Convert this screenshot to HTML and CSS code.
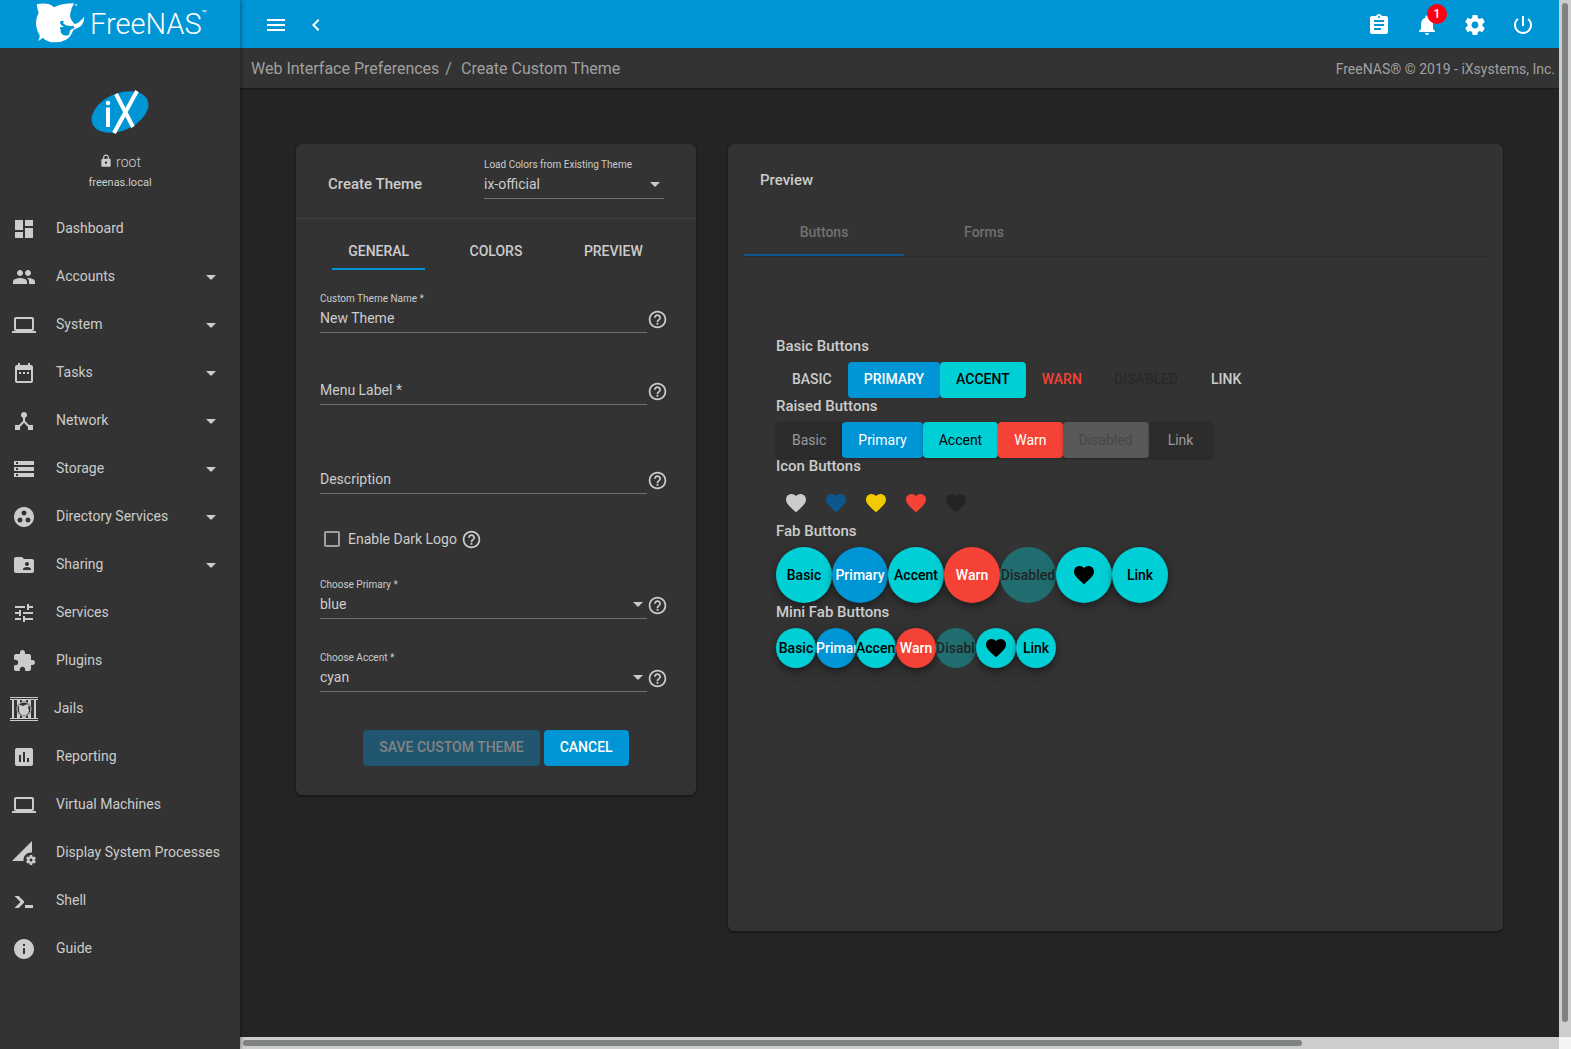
FILE: index.html
```html
<!DOCTYPE html>
<html lang="en">
<head>
<meta charset="utf-8">
<title>FreeNAS - Create Custom Theme</title>
<link rel="stylesheet" href="styles.css">
</head>
<body>
<svg class="defs" aria-hidden="true">
  <symbol id="i-dashboard" viewBox="0 0 24 24"><path d="M3 13h8V3H3v10zm0 8h8v-6H3v6zm10 0h8V11h-8v10zm0-18v6h8V3h-8z"/></symbol>
  <symbol id="i-people" viewBox="0 0 24 24"><path d="M16 11c1.66 0 2.99-1.34 2.99-3S17.66 5 16 5c-1.66 0-3 1.34-3 3s1.34 3 3 3zm-8 0c1.66 0 2.99-1.34 2.99-3S9.66 5 8 5C6.34 5 5 6.34 5 8s1.34 3 3 3zm0 2c-2.33 0-7 1.17-7 3.5V19h14v-2.500c0-2.330-4.670-3.500-7-3.500zm8 0c-.29 0-.62.020-.97.050 1.160.840 1.970 1.970 1.970 3.450V19h6v-2.500c0-2.330-4.670-3.500-7-3.500z"/></symbol>
  <symbol id="i-laptop" viewBox="0 0 24 24"><path d="M20 18c1.100 0 1.990-.9 1.990-2L22 6c0-1.100-.9-2-2-2H4c-1.100 0-2 .9-2 2v10c0 1.100.9 2 2 2H0v2h24v-2h-4zM4 6h16v10H4V6z"/></symbol>
  <symbol id="i-date" viewBox="0 0 24 24"><path d="M9 11H7v2h2v-2zm4 0h-2v2h2v-2zm4 0h-2v2h2v-2zm2-7h-1V2h-2v2H8V2H6v2H5c-1.110 0-1.990.9-1.990 2L3 20c0 1.100.89 2 2 2h14c1.100 0 2-.9 2-2V6c0-1.100-.9-2-2-2zm0 16H5V9h14v11z"/></symbol>
  <symbol id="i-hub" viewBox="0 0 24 24"><path d="M17 16l-4-4V8.820C14.160 8.400 15 7.300 15 6c0-1.660-1.340-3-3-3S9 4.340 9 6c0 1.300.84 2.400 2 2.820V12l-4 4H3v5h5v-3.050l4-4.200 4 4.200V21h5v-5h-4z"/></symbol>
  <symbol id="i-storage" viewBox="0 0 24 24"><path d="M2 20h20v-4H2v4zm2-3h2v2H4v-2zM2 4v4h20V4H2zm4 3H4V5h2v2zm-4 7h20v-4H2v4zm2-3h2v2H4v-2z"/></symbol>
  <symbol id="i-group" viewBox="0 0 24 24"><path d="M12 2C6.480 2 2 6.480 2 12s4.480 10 10 10 10-4.480 10-10S17.520 2 12 2zM8 17.500c-1.380 0-2.500-1.120-2.500-2.500s1.120-2.500 2.500-2.500 2.500 1.120 2.500 2.500-1.120 2.500-2.500 2.500zM9.500 8c0-1.380 1.120-2.500 2.500-2.500s2.500 1.120 2.500 2.500-1.120 2.500-2.500 2.500S9.500 9.380 9.500 8zm6.500 9.500c-1.380 0-2.500-1.120-2.500-2.500s1.120-2.500 2.500-2.500 2.500 1.120 2.500 2.500-1.120 2.500-2.500 2.500z"/></symbol>
  <symbol id="i-shared" viewBox="0 0 24 24"><path d="M20 6h-8l-2-2H4c-1.100 0-1.990.9-1.990 2L2 18c0 1.100.9 2 2 2h16c1.100 0 2-.9 2-2V8c0-1.100-.9-2-2-2zm-5 3c1.100 0 2 .9 2 2s-.9 2-2 2-2-.9-2-2 .9-2 2-2zm4 8h-8v-1c0-1.330 2.670-2 4-2s4 .67 4 2v1z"/></symbol>
  <symbol id="i-tune" viewBox="0 0 24 24"><path d="M3 17v2h6v-2H3zM3 5v2h10V5H3zm10 16v-2h8v-2h-8v-2h-2v6h2zM7 9v2H3v2h4v2h2V9H7zm14 4v-2H11v2h10zm-6-4h2V7h4V5h-4V3h-2v6z"/></symbol>
  <symbol id="i-extension" viewBox="0 0 24 24"><path d="M20.500 11H19V7c0-1.100-.9-2-2-2h-4V3.500C13 2.120 11.880 1 10.500 1S8 2.120 8 3.500V5H4c-1.100 0-1.990.9-1.990 2v3.800H3.500c1.490 0 2.700 1.210 2.700 2.700s-1.210 2.700-2.700 2.700H2V20c0 1.100.9 2 2 2h3.800v-1.500c0-1.490 1.210-2.700 2.700-2.700 1.490 0 2.700 1.210 2.700 2.700V22H17c1.100 0 2-.9 2-2v-4h1.500c1.380 0 2.500-1.120 2.500-2.500S21.880 11 20.500 11z"/></symbol>
  <symbol id="i-jail" viewBox="0 0 28 24"><path d="M0 0h28v1H0zM0 2h28v1H0zM0 21h28v1H0zM0 23h28v1H0z"/><path d="M2 3h2v18H2zM7 3h3v18H7zM18 3h3v18h-3zM24 3h2v18h-2zM12 3h4v18h-4z"/><circle cx="14" cy="12" r="7.500" fill="#333"/><circle cx="14" cy="12" r="7" fill="none" stroke="currentColor"/><path d="M9 8c1 0 3 0 4 1 2-1 4-2 6-1l-1 3 1 2c0 3-2 5-5 5s-5-2-5-5z"/></symbol>
  <symbol id="i-assessment" viewBox="0 0 24 24"><path d="M19 3H5c-1.100 0-2 .9-2 2v14c0 1.100.9 2 2 2h14c1.100 0 2-.9 2-2V5c0-1.100-.9-2-2-2zM9 17H7v-7h2v7zm4 0h-2V7h2v10zm4 0h-2v-4h2v4z"/></symbol>
  <symbol id="i-perm" viewBox="0 0 24 24"><path d="M18.990 11.500c.34 0 .67.030 1 .07L20 0 0 20h11.560c-.04-.33-.07-.66-.07-1 0-4.140 3.360-7.500 7.500-7.500zm3.710 7.990c.02-.16.040-.32.040-.49 0-.17-.01-.33-.04-.49l1.060-.83c.09-.08.120-.21.060-.32l-1-1.730c-.06-.11-.19-.15-.31-.11l-1.240.5c-.26-.2-.54-.37-.85-.49l-.19-1.320c-.01-.12-.12-.21-.24-.21h-2c-.12 0-.23.090-.25.210l-.19 1.320c-.3.130-.59.290-.85.490l-1.240-.5c-.11-.04-.24 0-.31.110l-1 1.730c-.06.110-.04.240.06.320l1.060.83c-.02.160-.03.320-.03.490 0 .17.010.33.030.49l-1.060.83c-.09.080-.12.210-.06.320l1 1.730c.06.110.19.150.31.110l1.240-.5c.26.2.54.370.85.490l.19 1.320c.02.120.12.210.25.210h2c.12 0 .23-.09.250-.21l.19-1.320c.3-.13.590-.29.840-.49l1.250.5c.11.040.24 0 .31-.11l1-1.730c.06-.11.030-.24-.06-.32l-1.070-.83zm-3.710 1.010c-.83 0-1.500-.67-1.500-1.500s.67-1.500 1.500-1.500 1.500.67 1.500 1.500-.67 1.500-1.500 1.500z"/></symbol>
  <symbol id="i-shell" viewBox="0 0 24 24"><path d="M13 19v-3h8v3h-8zM8.500 13L2.470 7h4.240l4.960 4.960c.58.590.58 1.550 0 2.130L6.740 19H2.500l6-6z"/></symbol>
  <symbol id="i-info" viewBox="0 0 24 24"><path d="M12 2C6.480 2 2 6.480 2 12s4.480 10 10 10 10-4.480 10-10S17.520 2 12 2zm1 15h-2v-6h2v6zm0-8h-2V7h2v2z"/></symbol>
  <symbol id="i-down" viewBox="0 0 24 24"><path d="M7 10l5 5 5-5z"/></symbol>
  <symbol id="i-menu" viewBox="0 0 24 24"><path d="M3 18h18v-2H3v2zm0-5h18v-2H3v2zm0-7v2h18V6H3z"/></symbol>
  <symbol id="i-left" viewBox="0 0 24 24"><path d="M15.410 7.410L14 6l-6 6 6 6 1.410-1.410L10.830 12z"/></symbol>
  <symbol id="i-clip" viewBox="0 0 24 24"><path d="M19 3h-4.180C14.400 1.840 13.300 1 12 1c-1.300 0-2.400.84-2.820 2H5c-1.100 0-2 .9-2 2v14c0 1.100.9 2 2 2h14c1.100 0 2-.9 2-2V5c0-1.100-.9-2-2-2zm-7 0c.55 0 1 .45 1 1s-.45 1-1 1-1-.45-1-1 .45-1 1-1zm2 14H7v-2h7v2zm3-4H7v-2h10v2zm0-4H7V7h10v2z"/></symbol>
  <symbol id="i-bell" viewBox="0 0 24 24"><path d="M12 22c1.100 0 2-.9 2-2h-4c0 1.100.89 2 2 2zm6-6v-5c0-3.070-1.640-5.640-4.500-6.320V4c0-.83-.67-1.500-1.500-1.500s-1.500.67-1.500 1.500v.68C7.630 5.360 6 7.920 6 11v5l-2 2v1h16v-1l-2-2z"/></symbol>
  <symbol id="i-gear" viewBox="0 0 24 24"><path d="M19.430 12.980c.04-.32.070-.64.070-.98s-.03-.66-.07-.98l2.110-1.650c.19-.15.240-.42.120-.64l-2-3.460c-.12-.22-.39-.3-.61-.22l-2.490 1c-.52-.4-1.080-.73-1.690-.98l-.38-2.650C14.460 2.180 14.250 2 14 2h-4c-.25 0-.46.180-.49.420l-.38 2.650c-.61.250-1.170.59-1.690.98l-2.490-1c-.23-.09-.49 0-.61.220l-2 3.460c-.13.220-.07.490.12.640l2.110 1.650c-.04.320-.07.650-.07.980s.03.660.07.980l-2.110 1.650c-.19.150-.24.420-.12.640l2 3.460c.12.220.39.300.61.220l2.490-1c.52.400 1.080.73 1.690.98l.38 2.650c.03.240.24.420.49.420h4c.25 0 .46-.18.490-.42l.38-2.650c.61-.25 1.170-.59 1.690-.98l2.490 1c.23.090.49 0 .61-.22l2-3.460c.12-.22.070-.49-.12-.64l-2.110-1.650zM12 15.500c-1.930 0-3.500-1.570-3.500-3.500s1.570-3.500 3.500-3.500 3.500 1.570 3.500 3.500-1.570 3.500-3.500 3.500z"/></symbol>
  <symbol id="i-power" viewBox="0 0 24 24"><path d="M13 3h-2v10h2V3zm4.830 2.170l-1.420 1.420C17.990 7.860 19 9.810 19 12c0 3.870-3.130 7-7 7s-7-3.130-7-7c0-2.190 1.010-4.140 2.580-5.420L6.170 5.170C4.230 6.820 3 9.260 3 12c0 4.970 4.030 9 9 9s9-4.030 9-9c0-2.740-1.230-5.180-3.170-6.830z"/></symbol>
  <symbol id="i-help" viewBox="0 0 24 24"><path d="M11 18h2v-2h-2v2zm1-16C6.480 2 2 6.480 2 12s4.480 10 10 10 10-4.480 10-10S17.520 2 12 2zm0 18c-4.410 0-8-3.590-8-8s3.590-8 8-8 8 3.590 8 8-3.590 8-8 8zm0-14c-2.210 0-4 1.790-4 4h2c0-1.100.9-2 2-2s2 .9 2 2c0 2-3 1.750-3 5h2c0-2.250 3-2.500 3-5 0-2.210-1.790-4-4-4z"/></symbol>
  <symbol id="i-lock" viewBox="0 0 24 24"><path d="M18 8h-1V6c0-2.760-2.240-5-5-5S7 3.240 7 6v2H6c-1.100 0-2 .9-2 2v10c0 1.100.9 2 2 2h12c1.100 0 2-.9 2-2V10c0-1.100-.9-2-2-2zm-6 9c-1.100 0-2-.9-2-2s.9-2 2-2 2 .9 2 2-.9 2-2 2zm3.100-9H8.900V6c0-1.710 1.390-3.100 3.100-3.100 1.710 0 3.100 1.390 3.100 3.100v2z"/></symbol>
  <symbol id="i-heart" viewBox="0 0 24 24"><path d="M12 21.350l-1.450-1.320C5.400 15.360 2 12.280 2 8.500 2 5.420 4.420 3 7.500 3c1.740 0 3.410.81 4.500 2.090C13.090 3.810 14.760 3 16.500 3 19.580 3 22 5.420 22 8.500c0 3.780-3.400 6.860-8.550 11.540L12 21.350z"/></symbol>
</svg>

<div class="app">
  <aside class="sidebar">
    <a class="brand" href="#">
      <svg class="shark" viewBox="15 6 150 126" aria-hidden="true"><path d="M20 13Q40 8 58 13 66 16 72 22 95 10 132 10 124 24 121 40 118 52 126 62L133 72Q150 68 162 50 164 68 150 80 138 86 130 90 122 112 108 119 88 130 60 126 46 122 38 113 33 119 24 123 30 114 29 106 18 90 18 66 19 50 26 39 22 26 20 13z"/><path class="cut" d="M90 66Q94 60 102 64L99 69Q108 80 130 77L134 84Q124 86 120 92L117 104Q106 110 96 103 90 98 92 88 88 86 90 82L102 80Q90 76 90 66z"/><circle cx="138" cy="15" r="4" opacity=".5"/></svg>
      <span class="brand-name">FreeNAS</span><span class="brand-tm">™</span>
    </a>
    <div class="profile">
      <svg class="ix" viewBox="0 0 58 44" role="img" aria-label="iXsystems"><ellipse cx="29" cy="22" rx="30" ry="18.500" transform="rotate(-24 29 22)" fill="#0095d5"/><g fill="none" stroke="#fff" stroke-width="4"><path d="M17 17.500V37M25 4l17 33M46 1L23 43"/></g><circle cx="17" cy="13" r="2.200" fill="#fff"/></svg>
      <div class="user"><svg class="lock"><use href="#i-lock"/></svg>root</div>
      <div class="host">freenas.local</div>
    </div>
    <nav class="nav">
      <a href="#"><svg><use href="#i-dashboard"/></svg><span>Dashboard</span></a>
      <a href="#"><svg><use href="#i-people"/></svg><span>Accounts</span><svg class="more"><use href="#i-down"/></svg></a>
      <a href="#"><svg><use href="#i-laptop"/></svg><span>System</span><svg class="more"><use href="#i-down"/></svg></a>
      <a href="#"><svg><use href="#i-date"/></svg><span>Tasks</span><svg class="more"><use href="#i-down"/></svg></a>
      <a href="#"><svg><use href="#i-hub"/></svg><span>Network</span><svg class="more"><use href="#i-down"/></svg></a>
      <a href="#"><svg><use href="#i-storage"/></svg><span>Storage</span><svg class="more"><use href="#i-down"/></svg></a>
      <a href="#"><svg><use href="#i-group"/></svg><span>Directory Services</span><svg class="more"><use href="#i-down"/></svg></a>
      <a href="#"><svg><use href="#i-shared"/></svg><span>Sharing</span><svg class="more"><use href="#i-down"/></svg></a>
      <a href="#"><svg><use href="#i-tune"/></svg><span>Services</span></a>
      <a href="#"><svg><use href="#i-extension"/></svg><span>Plugins</span></a>
      <a href="#" class="jails"><svg><use href="#i-jail"/></svg><span>Jails</span></a>
      <a href="#"><svg><use href="#i-assessment"/></svg><span>Reporting</span></a>
      <a href="#"><svg><use href="#i-laptop"/></svg><span>Virtual Machines</span></a>
      <a href="#"><svg><use href="#i-perm"/></svg><span>Display System Processes</span></a>
      <a href="#"><svg><use href="#i-shell"/></svg><span>Shell</span></a>
      <a href="#"><svg><use href="#i-info"/></svg><span>Guide</span></a>
    </nav>
  </aside>

  <div class="page">
    <header class="topbar">
      <div class="tools">
        <button aria-label="Toggle menu"><svg><use href="#i-menu"/></svg></button>
        <button aria-label="Collapse menu"><svg><use href="#i-left"/></svg></button>
      </div>
      <div class="tools actions">
        <button aria-label="Task manager"><svg><use href="#i-clip"/></svg></button>
        <button aria-label="Alerts"><svg><use href="#i-bell"/></svg><span class="badge">1</span></button>
        <button aria-label="Settings"><svg><use href="#i-gear"/></svg></button>
        <button aria-label="Power"><svg><use href="#i-power"/></svg></button>
      </div>
    </header>
    <div class="crumbs">
      <nav><a href="#">Web Interface Preferences</a><span class="sep">/</span><a href="#">Create Custom Theme</a></nav>
      <span class="copy">FreeNAS® © 2019 - iXsystems, Inc.</span>
    </div>

    <main class="content">
      <form class="card editor">
        <div class="editor-head">
          <h2>Create Theme</h2>
          <div class="field load">
            <label for="load">Load Colors from Existing Theme</label>
            <div class="control"><select id="load"><option>ix-official</option></select><svg class="arrow"><use href="#i-down"/></svg></div>
          </div>
        </div>
        <div class="tabs">
          <button type="button" class="active">General</button>
          <button type="button">Colors</button>
          <button type="button">Preview</button>
        </div>
        <div class="fields">
          <div class="line">
            <div class="field"><label for="name">Custom Theme Name *</label><div class="control"><input id="name" type="text" value="New Theme"></div></div>
            <svg class="help"><use href="#i-help"/></svg>
          </div>
          <div class="line menu-line">
            <div class="field"><div class="control"><input id="menu" type="text" aria-label="Menu Label" placeholder="Menu Label *"></div></div>
            <svg class="help"><use href="#i-help"/></svg>
          </div>
          <div class="line desc-line">
            <div class="field"><div class="control"><input id="desc" type="text" aria-label="Description" placeholder="Description"></div></div>
            <svg class="help"><use href="#i-help"/></svg>
          </div>
          <div class="check"><input id="dark" type="checkbox"><label for="dark">Enable Dark Logo</label><svg class="help"><use href="#i-help"/></svg></div>
          <div class="line">
            <div class="field"><label for="primary">Choose Primary *</label><div class="control"><select id="primary"><option>blue</option></select><svg class="arrow"><use href="#i-down"/></svg></div></div>
            <svg class="help"><use href="#i-help"/></svg>
          </div>
          <div class="line accent-line">
            <div class="field"><label for="accent">Choose Accent *</label><div class="control"><select id="accent"><option>cyan</option></select><svg class="arrow"><use href="#i-down"/></svg></div></div>
            <svg class="help"><use href="#i-help"/></svg>
          </div>
        </div>
        <div class="submit">
          <button class="btn upper save" disabled>Save Custom Theme</button>
          <button type="button" class="btn upper primary">Cancel</button>
        </div>
      </form>

      <section class="card preview">
        <h2>Preview</h2>
        <div class="ptabs"><button class="active">Buttons</button><button>Forms</button></div>
        <div class="samples">
          <h3>Basic Buttons</h3>
          <div class="row basic">
            <button class="btn upper">Basic</button><button class="btn upper primary">Primary</button><button class="btn upper accent">Accent</button><button class="btn upper warn-text">Warn</button><button class="btn upper off" disabled>Disabled</button><a href="#" class="btn upper">Link</a>
          </div>
          <h3>Raised Buttons</h3>
          <div class="row raised">
            <button class="btn">Basic</button><button class="btn primary">Primary</button><button class="btn accent">Accent</button><button class="btn warn">Warn</button><button class="btn grey" disabled>Disabled</button><a href="#" class="btn">Link</a>
          </div>
          <h3>Icon Buttons</h3>
          <div class="row icons">
            <button aria-label="Basic heart"><svg><use href="#i-heart"/></svg></button><button class="h-primary" aria-label="Primary heart"><svg><use href="#i-heart"/></svg></button><button class="h-accent" aria-label="Accent heart"><svg><use href="#i-heart"/></svg></button><button class="h-warn" aria-label="Warn heart"><svg><use href="#i-heart"/></svg></button><button class="h-off" aria-label="Disabled heart" disabled><svg><use href="#i-heart"/></svg></button>
          </div>
          <h3>Fab Buttons</h3>
          <div class="row fabs">
            <button class="fab">Basic</button><button class="fab primary">Primary</button><button class="fab">Accent</button><button class="fab warn">Warn</button><button class="fab dim" disabled>Disabled</button><button class="fab" aria-label="Favorite"><svg><use href="#i-heart"/></svg></button><a href="#" class="fab">Link</a>
          </div>
          <h3>Mini Fab Buttons</h3>
          <div class="row fabs mini">
            <button class="fab">Basic</button><button class="fab primary">Primary</button><button class="fab">Accent</button><button class="fab warn">Warn</button><button class="fab dim" disabled>Disabled</button><button class="fab" aria-label="Favorite"><svg><use href="#i-heart"/></svg></button><a href="#" class="fab">Link</a>
          </div>
        </div>
      </section>
    </main>
    <div class="hbar" aria-hidden="true"><i></i></div>
  </div>
  <div class="vbar" aria-hidden="true"><i></i><b></b></div>
</div>
</body>
</html>
```
FILE: styles.css
```css
* { box-sizing: border-box; }
body { margin: 0; background: #242424; color: #ccc; font: 14px/20px Roboto, "Liberation Sans", sans-serif; }
svg { width: 24px; height: 24px; fill: currentColor; flex: none; display: block; }
button, input, select { font: inherit; color: inherit; background: none; border: 0; padding: 0; margin: 0; border-radius: 0; }
a { color: inherit; text-decoration: none; }
h2, h3 { margin: 0; font-size: 15px; font-weight: 500; line-height: 24px; }
.defs { position: absolute; width: 0; height: 0; }

.app { display: grid; grid-template-columns: 240px minmax(0, 1fr) 12px; min-height: 100vh; }

/* Sidebar */
.sidebar { background: #333; box-shadow: 1px 0 4px rgba(0, 0, 0, .4); z-index: 1; }
.brand { display: flex; align-items: flex-start; height: 48px; padding: 2px 0 0 35px; background: #0095d5; color: #fff; }
.shark { width: 50px; height: 42px; }
.shark .cut { fill: #0095d5; }
.brand-name { margin-left: 5px; font-size: 29px; font-weight: 300; line-height: 44px; }
.brand-tm { font-size: 8px; line-height: 24px; }
.profile { display: flex; flex-direction: column; align-items: center; padding-top: 42px; height: 157px; }
.ix { width: 58px; height: 44px; }
.user { display: flex; align-items: center; gap: 3px; margin-top: 18px; line-height: 20px; font-weight: 300; }
.lock { width: 14px; height: 14px; margin-bottom: 2px; }
.host { font-size: 11px; line-height: 22px; }
.nav a { display: flex; align-items: center; height: 48px; padding: 0 17px 0 12px; }
.nav span { margin-left: 20px; flex: 1; padding-bottom: 2px; white-space: nowrap; }
.nav .jails { padding-left: 10px; }
.nav .jails svg { width: 28px; }
.nav .jails span { margin-left: 16px; }

/* Header */
.page { display: flex; flex-direction: column; min-width: 0; }
.topbar { display: flex; justify-content: space-between; align-items: center; height: 48px; padding: 2px 24px 0; background: #0095d5; color: #fff; }
.tools { display: flex; gap: 16px; }
.actions { gap: 24px; }
.tools button { position: relative; height: 24px; }
.badge { position: absolute; top: -9px; left: 12px; width: 20px; height: 20px; border-radius: 50%; background: #ff0013; font-size: 12px; font-weight: 500; line-height: 20px; text-align: center; }
.crumbs { display: flex; justify-content: space-between; align-items: center; height: 40px; padding: 1px 4px 0 11px; background: #333; color: #a0a0a0; font-size: 16px; box-shadow: 0 1px 2px rgba(0, 0, 0, .4); }
.sep { margin: 0 9px 0 6px; }
.copy { font-size: 14px; }

/* Cards */
.content { flex: 1; display: flex; align-items: flex-start; gap: 32px; padding: 56px; }
.card { background: #333; border-radius: 6px; box-shadow: 0 1px 3px rgba(0, 0, 0, .5); }
.editor { flex: none; width: 400px; padding-bottom: 29px; }
.editor-head { display: flex; justify-content: space-between; align-items: flex-start; height: 75px; padding: 12px 32px 0; border-bottom: 1px solid #404040; }
.editor-head h2 { padding-top: 16px; }
.tabs { display: grid; grid-template-columns: repeat(3, 1fr); justify-items: center; padding: 13px 24px 0; }
.tabs button { height: 38px; padding: 2px 16px 0; border-bottom: 2px solid transparent; font-weight: 500; text-transform: uppercase; }
.tabs .active { border-color: #0095d5; }

.fields { padding: 20px 28px 0 24px; }
.line { display: flex; align-items: flex-end; height: 43px; }
.field { flex: 1; display: flex; flex-direction: column; justify-content: flex-end; }
.field label { font-size: 10px; line-height: 14px; }
.editor-head .load { flex: 0 0 180px; padding-top: 2px; }
.control { display: flex; align-items: center; height: 27px; padding-bottom: 2px; border-bottom: 1px solid #707070; }
.control input, .control select { flex: 1; min-width: 0; width: 100%; height: 22px; appearance: none; outline: 0; }
.control input::placeholder { color: #ccc; opacity: 1; }
.arrow { margin: 0 -3px 0 -24px; pointer-events: none; }
.help { width: 21px; height: 21px; margin-bottom: 3px; }
.menu-line { margin-top: 29px; }
.desc-line { margin-top: 46px; }
.check { display: flex; align-items: center; gap: 8px; margin: 33px 0 25px; height: 24px; padding-left: 4px; }
.check input { appearance: none; width: 16px; height: 16px; border: 2px solid #a0a0a0; border-radius: 2px; }
.check .help { margin: 0 0 0 -4px; }
.accent-line { margin-top: 30px; }
.submit { display: flex; justify-content: center; gap: 4px; margin-top: 38px; }

.btn { display: inline-block; min-width: 64px; height: 36px; padding: 0 16px 2px; border-radius: 4px; line-height: 34px; text-align: center; }
.upper { font-weight: 500; text-transform: uppercase; }
.save { background: #20566f; color: #848484; }
.primary { background: #0095d5; color: #fff; }
.accent { background: #00d0d6; color: #000; }
.warn { background: #f44336; color: #fff; }
.warn-text { color: #f44336; }
.off { color: #292929; }

/* Preview */
.preview { flex: 1; min-width: 0; min-height: 787px; padding: 24px 16px 0; }
.preview h2 { padding-left: 16px; }
.ptabs { display: flex; margin-top: 16px; border-bottom: 1px solid #2b2b2b; }
.ptabs button { width: 160px; height: 48px; padding-top: 2px; border-bottom: 2px solid transparent; color: #707070; font-weight: 500; }
.ptabs .active { border-color: #0c578b; }
.samples { padding: 81px 32px 0; }
.samples h3 { line-height: 16px; padding-bottom: 8px; }
.row { display: flex; }
.raised .btn { padding-bottom: 0; line-height: 36px; color: #9a9a9a; background: #2c2c2c; box-shadow: 0 1px 3px rgba(0, 0, 0, .3); }
.raised .primary { color: #fff; background: #0095d5; }
.raised .accent { color: #000; background: #00d0d6; }
.raised .warn { color: #fff; background: #f44336; }
.raised .grey { color: #474747; background: #595959; }
.icons { height: 41px; align-items: flex-end; }
.icons button { display: grid; place-items: center; width: 40px; height: 40px; }
.h-primary { color: #0c578b; }
.h-accent { color: #f0cb00; }
.h-warn { color: #f44336; }
.h-off { color: #242424; }
.fabs { height: 57px; }
.fab { display: flex; align-items: center; justify-content: safe center; flex: none; width: 56px; height: 56px; border-radius: 50%; background: #00d0d6; color: #000; font-weight: 500; white-space: nowrap; box-shadow: 0 3px 5px rgba(0, 0, 0, .2), 0 6px 10px rgba(0, 0, 0, .14), 0 1px 18px rgba(0, 0, 0, .12); }
.fab.primary { background: #0095d5; color: #fff; }
.fab.warn { background: #f44336; color: #fff; }
.fab.dim { background: #206e70; color: #242424; box-shadow: none; }
.mini .fab { width: 40px; height: 40px; overflow: hidden; border-radius: 20px; }

/* Scroll rails */
.hbar { height: 12px; padding: 3px; background: #cdcdcd; }
.hbar i { display: block; width: calc(100% - 254px); height: 6px; border-radius: 3px; background: #7e8280; }
.vbar { display: flex; flex-direction: column; background: #cdcdcd; }
.vbar i { flex: 1; margin: 3px 3px 15px; border-radius: 3px; background: #7e8280; }
.vbar b { height: 12px; background: #f5f4f2; }
```
